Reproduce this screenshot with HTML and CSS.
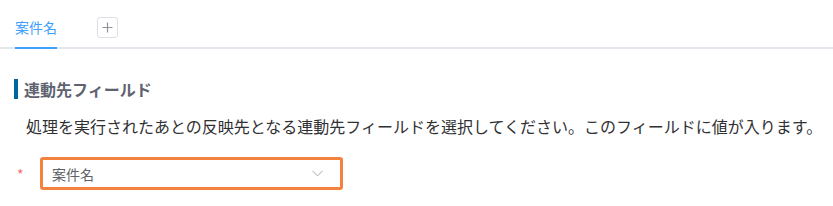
FILE: index.html
```html
<!DOCTYPE html>
<html lang="ja">
<head>
  <meta charset="UTF-8">
  <meta name="viewport" content="width=device-width, initial-scale=1.0">
  <title>連動先フィールド</title>
  <link rel="stylesheet" href="styles.css">
</head>
<body>
  <div class="tabs">
    <div class="tab-item is-active">案件名</div>
    <button class="tab-add" type="button">
      <svg width="11" height="11" viewBox="0 0 11 11"><path d="M5.5 0.5v10M0.5 5.5h10" stroke="#909399" stroke-width="1.2" fill="none"/></svg>
    </button>
  </div>

  <div class="section">
    <h2 class="section-title">連動先フィールド</h2>
    <p class="section-desc">処理を実行されたあとの反映先となる連動先フィールドを選択してください。このフィールドに値が入ります。</p>
    <div class="form-row">
      <span class="required">*</span>
      <div class="select">
        <span class="select-value">案件名</span>
        <svg class="select-arrow" width="11" height="7" viewBox="0 0 11 7"><path d="M0.5 0.8l5 5 5-5" stroke="#c0c4cc" stroke-width="1.1" fill="none"/></svg>
      </div>
    </div>
  </div>
</body>
</html>
```

FILE: styles.css
```css
body {
  margin: 0;
  padding: 7px 0 0 0;
  font-family: "Noto Sans CJK JP", "Noto Sans", sans-serif;
  background-color: #fff;
  color: #303133;
}
.tabs {
  display: flex;
  align-items: center;
  height: 40px;
  padding-left: 15px;
  border-bottom: 2px solid #e4e7ed;
}
.tab-item {
  align-self: flex-start;
  height: 42px;
  line-height: 40px;
  font-size: 14px;
  color: #409eff;
  box-sizing: border-box;
  border-bottom: 2px solid #409eff;
  margin-bottom: -2px;
}
.tab-add {
  margin-left: 40px;
  width: 21px;
  height: 21px;
  padding: 0;
  border: 1px solid #dcdfe6;
  border-radius: 3px;
  background: #fff;
  display: flex;
  align-items: center;
  justify-content: center;
}
.section {
  padding: 30px 0 0 14px;
}
.section-title {
  margin: 0;
  border-left: 4px solid #00679e;
  padding-left: 6px;
  font-size: 16px;
  line-height: 20px;
  font-weight: bold;
  color: #5f6370;
}
.section-desc {
  margin: 15px 0 0 0;
  padding-left: 12px;
  font-size: 16px;
  line-height: 24px;
  color: #303133;
}
.form-row {
  display: flex;
  align-items: center;
  margin-top: 19px;
}
.required {
  color: #f56c6c;
  font-size: 14px;
  width: 26px;
  padding-left: 3px;
  box-sizing: border-box;
}
.select {
  width: 303px;
  height: 33px;
  box-sizing: border-box;
  border: 3px solid #f5813f;
  border-radius: 3px;
  display: flex;
  align-items: center;
  justify-content: space-between;
  padding: 0 17px 0 9px;
}
.select-value {
  font-size: 14px;
  color: #606266;
}
```
